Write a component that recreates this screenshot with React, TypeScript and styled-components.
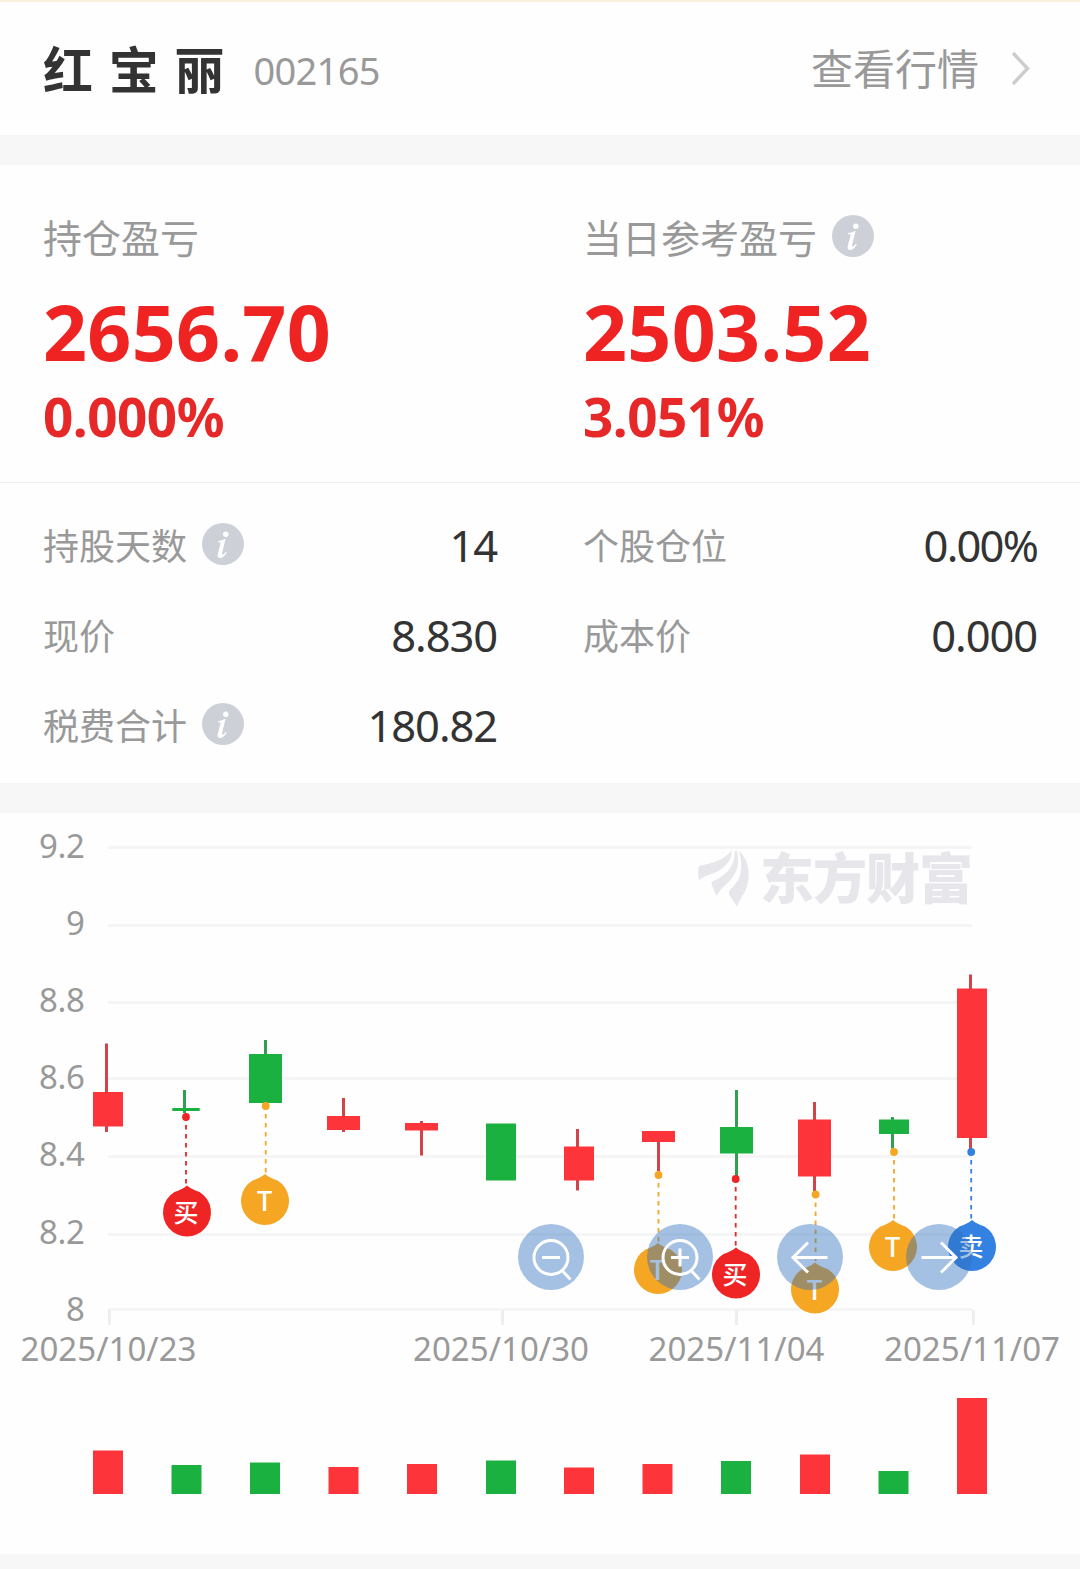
import React from "react";
import styled, { createGlobalStyle } from "styled-components";

const RED = "#fd353a";
const GREEN = "#1ab140";
const GREY = "#999999";
const numberFont = '"Noto Sans", "Open Sans", "Noto Sans CJK SC", sans-serif';
const textFont = '"Noto Sans CJK SC", "Noto Sans", sans-serif';

const GlobalStyle = createGlobalStyle`
  * { box-sizing: border-box; }
  body { margin: 0; background: #fefefe; font-family: ${textFont}; }
  button { font: inherit; border: 0; padding: 0; background: none; }
`;

const Page = styled.main`
  width: 1080px;
  height: 1569px;
  display: flex;
  flex-direction: column;
  overflow: hidden;
  background: #fefefe;
`;

const Header = styled.header`
  height: 135px;
  border-top: 2px solid #fbf0dc;
  padding: 0 50px 4px 43px;
  display: flex;
  align-items: center;
`;

const StockName = styled.h1`
  margin: 0;
  font-size: 50px;
  line-height: 70px;
  font-weight: 700;
  color: #333;
  word-spacing: 4.4px;
`;

const StockCode = styled.span`
  margin: 6px 0 0 29px;
  font-family: ${numberFont};
  font-size: 38px;
  line-height: 52px;
  letter-spacing: -0.7px;
  color: ${GREY};
`;

const QuoteLink = styled.button`
  margin-left: auto;
  display: flex;
  align-items: center;
  gap: 33px;
  font-size: 42px;
  line-height: 60px;
  color: ${GREY};
`;

const Chevron = styled.svg`
  margin-top: 4px;
`;

const Band = styled.div<{ $height: number }>`
  height: ${(p) => p.$height}px;
  flex: none;
  background: #f7f7f7;
`;

const Summary = styled.section`
  height: 318px;
  flex: none;
  padding: 41px 43px 0;
  border-bottom: 1.5px solid #eeeeee;
  display: grid;
  grid-template-columns: 540px 1fr;
`;

const Metric = styled.div`
  display: flex;
  flex-direction: column;
`;

const Label = styled.div<{ $size: number }>`
  display: flex;
  align-items: center;
  gap: 15px;
  height: 60px;
  font-size: ${(p) => p.$size}px;
  color: ${GREY};
`;

const Amount = styled.strong`
  margin-top: 16px;
  font-family: ${numberFont};
  font-size: 77px;
  line-height: 100px;
  letter-spacing: 0.3px;
  font-weight: 700;
  color: #f02323;
`;

const Percent = styled.strong`
  margin-top: 2px;
  font-family: ${numberFont};
  font-size: 53px;
  line-height: 66px;
  letter-spacing: -0.5px;
  font-weight: 700;
  color: #e62828;
`;

const Details = styled.section`
  height: 300px;
  flex: none;
  padding: 16px 43px 0;
  display: grid;
  grid-template-columns: 454px 454px;
  column-gap: 86px;
  grid-auto-rows: 90px;
`;

const DetailRow = styled.div`
  display: flex;
  align-items: center;
  justify-content: space-between;
`;

const Value = styled.span<{ $tight: boolean }>`
  margin-top: 2px;
  font-family: ${numberFont};
  font-size: 43.5px;
  line-height: 60px;
  letter-spacing: ${(p) => (p.$tight ? -1.8 : -1.1)}px;
  color: #333;
`;

const ChartPanel = styled.section`
  position: relative;
  height: 741px;
  flex: none;
`;

const Canvas = styled.svg`
  display: block;
`;

const ControlButton = styled.button<{ $x: number }>`
  position: absolute;
  left: ${(p) => p.$x - 33}px;
  top: 411px;
  width: 66px;
  height: 66px;
  border-radius: 50%;
  background: rgba(46, 111, 190, 0.43);
`;

const AxisText = styled.text`
  font-family: ${numberFont};
  font-size: 33px;
  fill: ${GREY};
`;

const PinText = styled.text`
  font-family: ${textFont};
  font-weight: 500;
  fill: #fff;
  text-anchor: middle;
`;

const BrandText = styled.text`
  font-family: ${textFont};
  font-weight: 900;
  font-size: 54px;
  fill: #e6e6eb;
`;

const InfoIcon = () => (
  <svg width="42" height="42" viewBox="-21 -21 42 42">
    <circle r="21" fill="#cdd1d7" />
    <circle cx="2.8" cy="-9.8" r="2.7" fill="#fff" />
    <path
      d="M-5-2.7C-2-3.1 0-4 2.6-5.2L-.8 8.4c-.4 1.7.1 2.5 1 2.1 1-.4 1.900-1.500 2.800-2.700l.8.600C1.900 11.800-.4 14-2.900 14c-2.300 0-3-1.600-2.300-4.200l2.700-10.100c.3-1.200-.1-1.500-2.500-1.500z"
      fill="#fff"
    />
  </svg>
);

type Row = { label: string; value: string; info?: boolean };
const rows: Row[] = [
  { label: "持股天数", value: "14", info: true },
  { label: "个股仓位", value: "0.00%" },
  { label: "现价", value: "8.830" },
  { label: "成本价", value: "0.000" },
  { label: "税费合计", value: "180.82", info: true },
];

const gridLines = [
  { label: "9.2", y: 846, base: 857.5 },
  { label: "9", y: 924, base: 934.5 },
  { label: "8.8", y: 1001, base: 1011.5 },
  { label: "8.6", y: 1077, base: 1088.5 },
  { label: "8.4", y: 1155, base: 1166 },
  { label: "8.2", y: 1233, base: 1243.5 },
  { label: "8", y: 1308, base: 1320.5 },
];

const dates = [
  { label: "2025/10/23", x: 20.5, tick: 108 },
  { label: "2025/10/30", x: 413, tick: 501 },
  { label: "2025/11/04", x: 648.5, tick: 735 },
  { label: "2025/11/07", x: 884, tick: 972 },
];

type Candle = {
  up: boolean;
  wick: [number, number, number];
  body: [number, number, number, number];
  bar: [number, number];
};
const candles: Candle[] = [
  { up: true, wick: [105, 1043.5, 1132], body: [93, 1092, 30, 34.5], bar: [93, 1450.5] },
  { up: false, wick: [183, 1090, 1113], body: [172.3, 1108, 27.4, 3], bar: [171.5, 1465] },
  { up: false, wick: [264, 1040, 1055], body: [249, 1054, 33, 49], bar: [250, 1462.5] },
  { up: true, wick: [342, 1098, 1132], body: [327, 1116, 33, 14], bar: [328.5, 1467] },
  { up: true, wick: [420, 1121, 1155.5], body: [405, 1123, 33, 7.5], bar: [407, 1464] },
  { up: false, wick: [500, 1124, 1180], body: [486, 1123.5, 30, 57], bar: [486, 1460.5] },
  { up: true, wick: [576, 1129, 1190.5], body: [564, 1146.5, 30, 34], bar: [564, 1467.5] },
  { up: true, wick: [657, 1131, 1171], body: [642, 1131, 33, 11], bar: [642.5, 1464] },
  { up: false, wick: [735, 1090, 1176], body: [720, 1127, 33, 26.5], bar: [721, 1461] },
  { up: true, wick: [813, 1102, 1191], body: [798, 1119.5, 33, 57], bar: [800, 1454.5] },
  { up: false, wick: [891, 1117, 1148.5], body: [879, 1119.5, 30, 14.5], bar: [878.5, 1471] },
  { up: true, wick: [969, 974.5, 1149], body: [957, 988.5, 30, 149.5], bar: [957, 1398] },
];

const pins = [
  { x: 186, dot: 1117, cx: 187, tip: 1185.5, label: "买", color: "#ef2424" },
  { x: 265.7, dot: 1106, cx: 265, tip: 1174, label: "T", color: "#f5a623" },
  { x: 658.5, dot: 1175, cx: 658, tip: 1243, label: "T", color: "#f5a623" },
  { x: 735.7, dot: 1179, cx: 736, tip: 1247.5, label: "买", color: "#ef2424" },
  { x: 815.6, dot: 1194.5, cx: 815, tip: 1262.5, label: "T", color: "#f5a623" },
  { x: 894, dot: 1152, cx: 893, tip: 1220, label: "T", color: "#f5a623" },
  { x: 971.2, dot: 1152, cx: 972, tip: 1220, label: "卖", color: "#3381e0" },
];

const controls = [
  { name: "缩小", x: 551, path: "M17 0A17 17 0 1 1-17 0A17 17 0 1 1 17 0M12 14L19.5 22M-9 0H9" },
  { name: "放大", x: 680, path: "M17 0A17 17 0 1 1-17 0A17 17 0 1 1 17 0M12 14L19.5 22M-9 0H9M0-9V9" },
  { name: "向左", x: 810, path: "M17.5 0H-17M-2-15L-17 0L-2 15" },
  { name: "向右", x: 939, path: "M-17.5 0H17M2-15L17 0L2 15" },
];

const Pin = ({ x, dot, cx, tip, label, color }: (typeof pins)[number]) => (
  <g>
    <line x1={x} x2={x} y1={dot + 8} y2={tip} stroke={color} strokeWidth="1.8" strokeDasharray="4.5 4.5" />
    <circle cx={x} cy={dot} r="3.9" fill={color} />
    <path
      transform={`translate(${cx} ${tip})`}
      d="M0 0C4 3.3 7.500 4.600 12.500 6.500A24 24 0 1 1-12.500 6.500C-7.500 4.600-4 3.300 0 0Z"
      fill={color}
    />
    <PinText
      x={label === "T" ? cx - 0.5 : cx - 1}
      y={tip + (label === "T" ? 37 : 36)}
      fontSize={label === "T" ? 26.5 : 25}
    >
      {label}
    </PinText>
  </g>
);

const Chart = () => (
  <Canvas width="1080" height="741" viewBox="0 813 1080 741">
    {gridLines.map((g) => (
      <g key={g.label}>
        <rect x="108" y={g.y} width="864" height="3" fill="#f5f5f5" />
        <AxisText x="84.5" y={g.base} textAnchor="end" letterSpacing="-0.4">{g.label}</AxisText>
      </g>
    ))}
    {dates.map((d) => (
      <g key={d.label}>
        <rect x={d.tick} y="1310" width="3" height="15" fill="#eeeeee" />
        <AxisText x={d.x} y="1360.5" textLength="176">{d.label}</AxisText>
      </g>
    ))}
    <g fill="#e6e6eb">
      <g transform="translate(692 844) scale(0.33333)">
        <path d="M22 108C18 94 17 76 22 66C45 60 90 56 119 19C119 62 82 84 52 92C40 95 30 101 22 108Z" />
        <path d="M128 20C134 20 134 20 136 24C147 80 120 105 96 127C88 135 80 144 74 156C67 142 60 126 58 114C96 96 130 74 128 20Z" />
        <path d="M140 21C174 48 178 104 158 144C147 163 140 172 135 188C125 172 115 160 110 146C112 138 119 132 126 125C148 102 155 68 140 21Z" />
      </g>
      <BrandText x="760" y="899" textLength="213">东方财富</BrandText>
    </g>
    {candles.map((c, i) => {
      const [wx, top, bottom] = c.wick;
      const [bx, by, bw, bh] = c.body;
      return (
        <g key={i}>
          <rect x={wx} y={top} width="3" height={bottom - top} fill={c.up ? "#cf4549" : "#309f50"} />
          <rect x={bx} y={by} width={bw} height={bh} fill={c.up ? RED : GREEN} />
          <rect x={c.bar[0]} y={c.bar[1]} width="30" height={1494 - c.bar[1]} fill={c.up ? RED : GREEN} />
        </g>
      );
    })}
    {pins.map((p) => <Pin key={p.x} {...p} />)}
  </Canvas>
);

export default function App() {
  return (
    <>
      <GlobalStyle />
      <Page>
        <Header>
          <StockName>红 宝 丽</StockName>
          <StockCode>002165</StockCode>
          <QuoteLink>
            查看行情
            <Chevron width="18" height="36" viewBox="0 0 18 36" fill="none">
              <path d="M1 2L15.5 17.5L1 33" stroke="#cccccc" strokeWidth="3.5" />
            </Chevron>
          </QuoteLink>
        </Header>
        <Band $height={30} />
        <Summary>
          <Metric>
            <Label $size={39}>持仓盈亏</Label>
            <Amount>2656.70</Amount>
            <Percent>0.000%</Percent>
          </Metric>
          <Metric>
            <Label $size={39}>当日参考盈亏<InfoIcon /></Label>
            <Amount>2503.52</Amount>
            <Percent>3.051%</Percent>
          </Metric>
        </Summary>
        <Details>
          {rows.map((r) => (
            <DetailRow key={r.label}>
              <Label $size={36}>{r.label}{r.info && <InfoIcon />}</Label>
              <Value $tight={r.value.endsWith("%")}>{r.value}</Value>
            </DetailRow>
          ))}
        </Details>
        <Band $height={30} />
        <ChartPanel>
          <Chart />
          {controls.map((c) => (
            <ControlButton key={c.name} $x={c.x} aria-label={c.name}>
              <svg width="66" height="66" viewBox="-33 -33.5 66 66" fill="none" stroke="#fff" strokeWidth="3" display="block">
                <path d={c.path} />
              </svg>
            </ControlButton>
          ))}
        </ChartPanel>
        <Band $height={15} />
      </Page>
    </>
  );
}
